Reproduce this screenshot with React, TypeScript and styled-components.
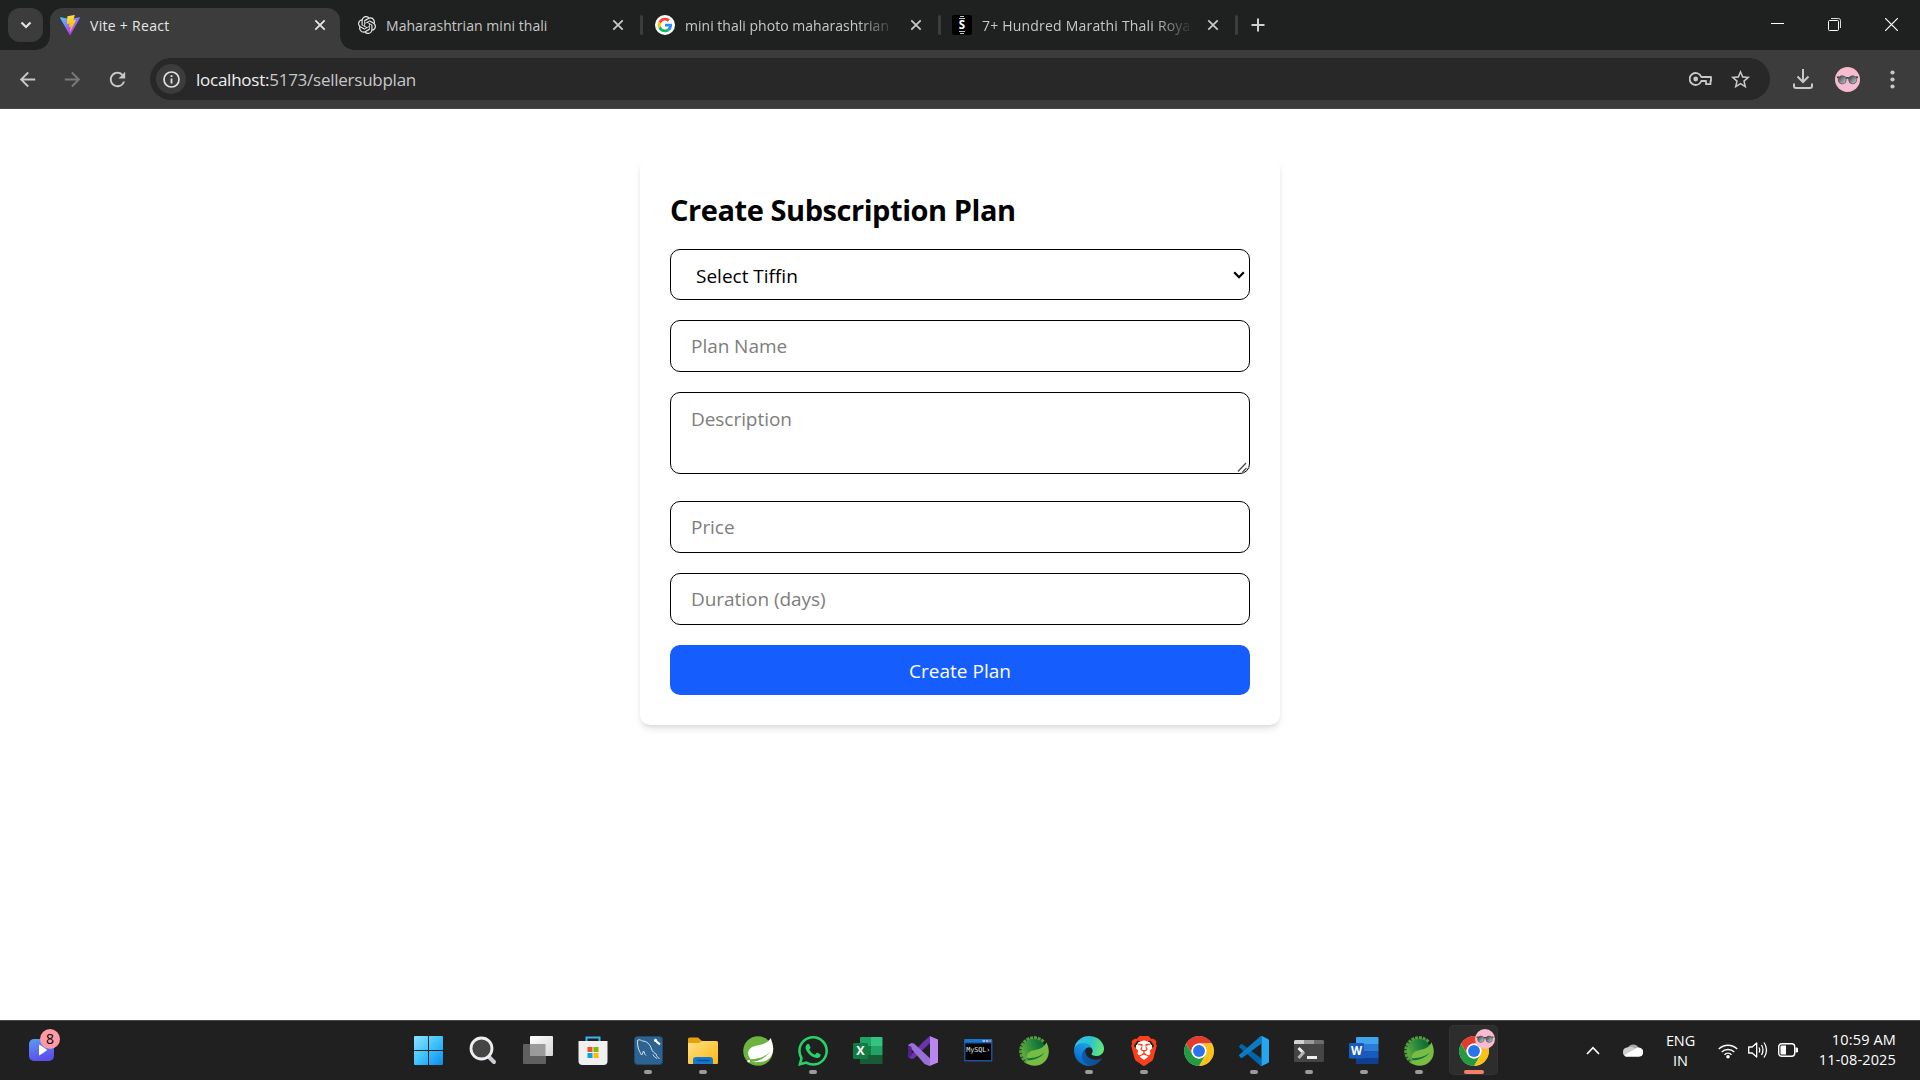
import React from "react";
import styled, { createGlobalStyle } from "styled-components";
import { SiOpenai, SiWhatsapp, SiBrave } from "react-icons/si";
import { MdArrowBack, MdArrowForward, MdRefresh, MdStarBorder } from "react-icons/md";

const GlobalStyle = createGlobalStyle`
  *, *::before, *::after { box-sizing: border-box; }
  body {
    margin: 0;
    background: #fff;
    overflow: hidden;
    font-family: "Segoe UI", "Open Sans", "Noto Sans", sans-serif;
  }
  svg { display: block; flex: none; }
`;

const Screen = styled.div`
  width: 1920px;
  height: 1080px;
  display: flex;
  flex-direction: column;
  overflow: hidden;
`;

/* ---------- Browser chrome ---------- */

const TabStrip = styled.div`
  height: 50px;
  flex: none;
  display: flex;
  align-items: flex-start;
  padding: 8px 0 0 8px;
  background: #1f2120;
`;

const TabSearch = styled.div`
  width: 35px;
  height: 34px;
  margin-right: 7px;
  border-radius: 12px;
  background: #3c3c3c;
  display: flex;
  align-items: center;
  justify-content: center;
`;

const ActiveTab = styled.div`
  position: relative;
  width: 290px;
  height: 42px;
  padding: 0 14px 8px 10px;
  border-radius: 13px 13px 0 0;
  background: #3c3c3c;
  display: flex;
  align-items: center;
  gap: 10px;
  &::before, &::after {
    content: "";
    position: absolute;
    bottom: 0;
    width: 14px;
    height: 14px;
  }
  &::before {
    left: -14px;
    background: radial-gradient(circle at 0 0, transparent 13.5px, #3c3c3c 14px);
  }
  &::after {
    right: -14px;
    background: radial-gradient(circle at 100% 0, transparent 13.5px, #3c3c3c 14px);
  }
`;

const Tab = styled.div<{ $w: number; $pad: number }>`
  width: ${(p) => p.$w}px;
  height: 34px;
  padding: 0 16.5px 0 ${(p) => p.$pad}px;
  display: flex;
  align-items: center;
  gap: 10px;
`;

const TabTitle = styled.span<{ $bright?: boolean; $fade?: boolean; $ls?: number }>`
  flex: 1;
  min-width: 0;
  overflow: hidden;
  white-space: nowrap;
  font-size: 14px;
  line-height: 20px;
  padding-top: 1px;
  letter-spacing: ${(p) => p.$ls ?? 0}px;
  color: ${(p) => (p.$bright ? "#e6e6e6" : "#c8c8c8")};
  ${(p) => p.$fade && "mask-image: linear-gradient(90deg, #000 calc(100% - 42px), transparent calc(100% - 4px));"}
`;

const TabDivider = styled.div`
  width: 3px;
  height: 20px;
  margin-top: 7px;
  border-radius: 2px;
  background: #3c3e3d;
`;

const NewTab = styled.div`
  width: 40px;
  height: 34px;
  display: flex;
  align-items: center;
  justify-content: center;
`;

const Caption = styled.div`
  margin-left: auto;
  height: 33px;
  display: flex;
  align-items: center;
  gap: 44px;
  padding-right: 22px;
`;

const Toolbar = styled.div`
  height: 59px;
  flex: none;
  display: flex;
  align-items: center;
  background: #3c3c3c;
  border-bottom: 1px solid #4a4848;
  padding: 0 0 0 16px;
`;

const NavButton = styled.div<{ $dim?: boolean }>`
  width: 23px;
  margin-right: 22px;
  flex: none;
  display: flex;
  justify-content: center;
  color: ${(p) => (p.$dim ? "#7a7a7a" : "#c8c8c8")};
  font-size: 23px;
`;

const Omnibox = styled.div`
  flex: none;
  width: 1620px;
  height: 42px;
  margin-left: -1px;
  border-radius: 21px;
  background: #282828;
  display: flex;
  align-items: center;
  padding: 0 18px 0 6px;
`;

const SiteInfo = styled.div`
  width: 30px;
  height: 30px;
  border-radius: 50%;
  background: #3c3c3c;
  display: flex;
  align-items: center;
  justify-content: center;
`;

const Url = styled.div`
  margin-left: 10px;
  flex: 1;
  font-size: 17px;
  line-height: 24px;
  padding-top: 1px;
  letter-spacing: -0.25px;
  color: #c7c7c7;
  b { font-weight: 400; color: #f0f0f0; }
`;

const OmniboxIcons = styled.div`
  display: flex;
  align-items: center;
  gap: 16px;
  color: #c8c8c8;
  font-size: 23px;
`;

const ToolIcons = styled.div`
  display: flex;
  align-items: center;
  margin-left: 22px;
`;

const Avatar = styled.div`
  margin: 0 30px 0 21px;
`;

/* ---------- Page ---------- */

const Page = styled.main`
  flex: 1;
  background: #fff;
  display: flex;
  justify-content: center;
  align-items: flex-start;
  padding-top: 50px;
`;

const Card = styled.form`
  width: 640px;
  height: 566px;
  padding: 30px;
  border-radius: 10px;
  background: #fff;
  box-shadow: 0 5px 7.5px -1px rgba(0, 0, 0, 0.1), 0 2.5px 5px -2.5px rgba(0, 0, 0, 0.1);
  display: flex;
  flex-direction: column;
`;

const Heading = styled.h2`
  margin: 0 0 20px;
  font-size: 29px;
  line-height: 42px;
  height: 40px;
  font-weight: 700;
  letter-spacing: -0.44px;
  color: #000;
  white-space: nowrap;
`;

const fieldStyle = `
  width: 100%;
  margin: 0 0 20px;
  border: 1px solid #000;
  border-radius: 10px;
  background: #fff;
  color: #000;
  font-family: inherit;
  font-size: 19px;
  line-height: 30px;
  letter-spacing: -0.05px;
  outline: none;
  &::placeholder { color: #7d7d7d; opacity: 1; }
`;

const SelectBox = styled.label`
  ${fieldStyle}
  height: 51px;
  display: flex;
  align-items: center;
  padding: 1px 4px 0 25px;
`;

const Select = styled.select`
  flex: 1;
  appearance: none;
  border: 0;
  padding: 1px 0 0;
  background: transparent;
  color: inherit;
  font: inherit;
  letter-spacing: 0;
  outline: none;
`;

const Input = styled.input`
  ${fieldStyle}
  height: 52px;
  padding: 10px 20px;
`;

const AreaBox = styled.div`
  ${fieldStyle}
  height: 82px;
  margin-bottom: 27px;
  display: flex;
  align-items: flex-end;
  padding-right: 1px;
`;

const Area = styled.textarea`
  flex: 1;
  height: 80px;
  border: 0;
  margin: 0;
  padding: 11px 0 0 20px;
  resize: none;
  background: transparent;
  font: inherit;
  letter-spacing: inherit;
  outline: none;
  &::placeholder { color: #7d7d7d; opacity: 1; }
`;

const Submit = styled.button`
  height: 50px;
  border: 0;
  border-radius: 10px;
  background: #155dfc;
  color: #fff;
  font-family: inherit;
  font-size: 19px;
  letter-spacing: 0;
  line-height: 30px;
  padding: 2px 0 0;
`;

/* ---------- Taskbar ---------- */

const Taskbar = styled.footer`
  height: 60px;
  flex: none;
  display: flex;
  background: #202020;
  border-top: 1px solid #484848;
  color: #fff;
`;

const Widgets = styled.div`
  position: relative;
  width: 403.5px;
  padding: 18px 0 0 28.5px;
`;

const Badge = styled.span`
  position: absolute;
  left: 40px;
  top: 8px;
  width: 20px;
  height: 20px;
  border-radius: 50%;
  background: #ff99a4;
  color: #000;
  font-size: 14px;
  line-height: 20px;
  text-align: center;
`;

const Apps = styled.div`
  display: flex;
  gap: 6.050px;
  padding-top: 4px;
`;

const AppButton = styled.div<{ $active?: boolean }>`
  position: relative;
  width: 49px;
  height: 50px;
  border-radius: 5px;
  display: flex;
  justify-content: center;
  padding-top: 10.500px;
  ${(p) => p.$active && "background: #2d2d2d; box-shadow: inset 0 0 0 1px #343434;"}
`;

const Running = styled.i<{ $active?: boolean }>`
  position: absolute;
  bottom: 1px;
  left: 50%;
  transform: translateX(-50%);
  width: ${(p) => (p.$active ? 20 : 8)}px;
  height: 4px;
  border-radius: 2px;
  background: ${(p) => (p.$active ? "#f5806a" : "#9b9b9b")};
`;

const ProfileMark = styled.div`
  position: absolute;
  top: 4px;
  left: 26px;
`;

const Tray = styled.div`
  margin-left: auto;
  display: flex;
  align-items: center;
  padding: 0 24px 1px 0;
`;

const CloudSlot = styled.div`
  margin-left: 23px;
`;

const TrayText = styled.div<{ $align: string; $w: number; $ls: number; $top?: number }>`
  width: ${(p) => p.$w}px;
  text-align: ${(p) => p.$align};
  font-size: 14.500px;
  line-height: 20px;
  padding-top: ${(p) => p.$top ?? 0}px;
  white-space: nowrap;
  letter-spacing: ${(p) => p.$ls}px;
`;

const Status = styled.div`
  display: flex;
  align-items: center;
  gap: 10px;
`;

/* ---------- Drawings ---------- */

const Cross = ({ c = "#c8c8c8" }: { c?: string }) => (
  <svg width="12" height="12" viewBox="0 0 12 12">
    <path d="M1.3 1.3 10.7 10.7M10.7 1.3 1.3 10.7" stroke={c} strokeWidth="1.8" />
  </svg>
);

const Vite = () => (
  <svg width="20" height="20" viewBox="0 0 256 257">
    <defs>
      <linearGradient id="va" x1="0" y1="0" x2="0.6" y2="0.9">
        <stop offset="0" stopColor="#41d1ff" />
        <stop offset="1" stopColor="#bd34fe" />
      </linearGradient>
      <linearGradient id="vb" x1="0.4" y1="0" x2="0.5" y2="1">
        <stop offset="0" stopColor="#ffea83" />
        <stop offset="0.1" stopColor="#ffdd35" />
        <stop offset="1" stopColor="#ffa800" />
      </linearGradient>
    </defs>
    <path fill="url(#va)" d="M255.153 37.938 134.897 252.976c-2.483 4.44-8.862 4.466-11.382.048L.875 37.958c-2.746-4.814 1.371-10.646 6.827-9.67l120.385 21.517a6.537 6.537 0 0 0 2.322-.004l117.867-21.483c5.438-.991 9.574 4.796 6.877 9.62Z" />
    <path fill="url(#vb)" d="M185.432.063 96.44 17.501a3.268 3.268 0 0 0-2.634 3.014l-5.474 92.456a3.268 3.268 0 0 0 3.997 3.378l24.777-5.718c2.318-.535 4.413 1.507 3.936 3.838l-7.361 36.047c-.495 2.426 1.782 4.5 4.151 3.78l15.304-4.649c2.372-.72 4.652 1.36 4.15 3.788l-11.698 56.621c-.732 3.542 3.979 5.473 5.943 2.437l1.313-2.028 72.516-144.72c1.215-2.423-.88-5.186-3.54-4.672l-25.505 4.922c-2.396.462-4.435-1.77-3.759-4.114l16.646-57.705c.677-2.35-1.37-4.583-3.769-4.113Z" />
  </svg>
);

const Google = () => (
  <svg width="20" height="20" viewBox="-9 -9 66 66">
    <circle cx="24" cy="24" r="33" fill="#fff" />
    <path fill="#FF4131" d="M24 9.5c3.54 0 6.71 1.22 9.21 3.6l6.85-6.85C35.9 2.38 30.47 0 24 0 14.62 0 6.51 5.38 2.56 13.22l7.98 6.19C12.43 13.72 17.74 9.5 24 9.5z" />
    <path fill="#3186FF" d="M46.98 24.55c0-1.57-.15-3.09-.38-4.55H24v9.02h12.94c-.58 2.96-2.26 5.48-4.78 7.18l7.73 6c4.51-4.18 7.09-10.36 7.09-17.65z" />
    <path fill="#FCC400" d="M10.53 28.59c-.48-1.45-.76-2.99-.76-4.59s.27-3.14.76-4.59l-7.98-6.19C.92 16.46 0 20.12 0 24c0 3.88.92 7.54 2.56 10.78l7.97-6.19z" />
    <path fill="#0EBC5F" d="M24 48c6.48 0 11.93-2.13 15.89-5.81l-7.73-6c-2.15 1.45-4.92 2.3-8.16 2.3-6.26 0-11.57-4.22-13.47-9.91l-7.98 6.19C6.51 42.62 14.62 48 24 48z" />
  </svg>
);

const SFavicon = () => (
  <svg width="20" height="20" viewBox="0 0 20 20">
    <rect width="20" height="20" rx="2" fill="#000" />
    <path d="M8 1.500h4M7 3.500h6M7 16.500h6M8 18.500h4" stroke="#c4c4c4" strokeWidth="1" />
    <text x="10" y="14" textAnchor="middle" fontFamily="Open Sans" fontWeight="700" fontSize="11.500" fill="#fff">S</text>
  </svg>
);

const Shades = ({ size }: { size: number }) => (
  <svg width={size} height={size} viewBox="0 0 25 25">
    <defs>
      <linearGradient id="lens" x1="0" y1="0" x2="1" y2="1">
        <stop offset="0" stopColor="#333" />
        <stop offset="1" stopColor="#c4dde0" />
      </linearGradient>
    </defs>
    <circle cx="12.5" cy="12.5" r="12.5" fill="#f8bbd0" />
    <path d="M2 10.5 4 10M23 10.5 21 10M10.5 11.5q2-1.500 4 0" stroke="#333" strokeWidth="1.4" fill="none" />
    <circle cx="7.3" cy="12.8" r="4" fill="url(#lens)" stroke="#5c5456" strokeWidth="0.8" />
    <circle cx="17.7" cy="12.8" r="4" fill="url(#lens)" stroke="#5c5456" strokeWidth="0.8" />
  </svg>
);

const WindowsLogo = () => (
  <svg width="29" height="29" viewBox="0 0 29 29">
    <defs>
      <linearGradient id="win" gradientUnits="userSpaceOnUse" x1="0" y1="0" x2="29" y2="29">
        <stop offset="0" stopColor="#8fe3ff" />
        <stop offset="0.5" stopColor="#3fc3fb" />
        <stop offset="1" stopColor="#0a8bf0" />
      </linearGradient>
    </defs>
    <path fill="url(#win)" d="M1 0h13v14H0V1a1 1 0 0 1 1-1zM15 0h13a1 1 0 0 1 1 1v13H15zM0 15h14v14H1a1 1 0 0 1-1-1zM15 15h14v13a1 1 0 0 1-1 1H15z" />
  </svg>
);

const SearchLogo = () => (
  <svg width="30" height="30" viewBox="0 0 30 30">
    <path d="m20 20 6 6" stroke="#c9cdd2" strokeWidth="4" strokeLinecap="round" />
    <circle cx="13.500" cy="12.500" r="10.500" fill="#454545" stroke="#eceef0" strokeWidth="2.800" />
  </svg>
);

const TaskView = () => (
  <svg width="30" height="30" viewBox="0 0 30 30">
    <defs>
      <linearGradient id="tv" x1="0" y1="0" x2="1" y2="1">
        <stop offset="0" stopColor="#fff" />
        <stop offset="1" stopColor="#d5d5d5" />
      </linearGradient>
    </defs>
    <rect x="0" y="8" width="23" height="20" rx="1" fill="#606060" />
    <rect x="7" y="0" width="23" height="20" rx="1" fill="url(#tv)" />
    <path d="M7 8h15.500V20H7z" fill="#9b9b9b" />
  </svg>
);

const Store = () => (
  <svg width="30" height="30" viewBox="0 0 30 30">
    <path d="M8.500 6V1.500h13V6" fill="none" stroke="#35b8ef" strokeWidth="2" />
    <path d="M.5 5h29v20a4 4 0 0 1-4 4h-21a4 4 0 0 1-4-4z" fill="#f0f0f0" />
    <path d="M9.500 11h5v5h-5z" fill="#f25022" />
    <path d="M15.500 11h5v5h-5z" fill="#7fba00" />
    <path d="M9.500 17h5v5h-5z" fill="#00a4ef" />
    <path d="M15.500 17h5v5h-5z" fill="#ffb900" />
  </svg>
);

const Workbench = () => (
  <svg width="29" height="29" viewBox="0 0 29 29">
    <rect x="0.500" y="0.500" width="28" height="28" rx="3" fill="#2c6390" stroke="#1f4b6e" />
    <path d="M7.500 19c-1-2-3-5-3.500-8C3.500 8 3 4.500 4 4c2-.8 3 .5 4.500 1 4 0 7.500 3 9 8 .8 2.500 3 4 5 5.500-.8 1 1.500 2.500 3 4.500M7.500 19c1-.8 1.500-3 2-4 1 1 1 3.500 2.500 4.500M19 18.500c.5 2 2.500 3 4 4" fill="none" stroke="#d9e7f0" strokeWidth="1" />
    <path d="m21 3 2 3 3 2.500" stroke="#fff" strokeWidth="2" fill="none" />
    <circle cx="21.500" cy="4.500" r="1.500" fill="#fff" />
  </svg>
);

const Folder = () => (
  <svg width="30" height="29" viewBox="0 0 30 29">
    <defs>
      <linearGradient id="fo" x1="0" y1="0" x2="1" y2="1">
        <stop offset="0" stopColor="#ffe083" />
        <stop offset="1" stopColor="#fdb913" />
      </linearGradient>
    </defs>
    <path d="M0 3a1.500 1.500 0 0 1 1.500-1.500H10L14 5v6H0z" fill="#e5a00d" />
    <path d="M0 7h11l3-2h14.500A1.500 1.500 0 0 1 30 6.500V27a1 1 0 0 1-1 1H1a1 1 0 0 1-1-1z" fill="url(#fo)" />
    <path d="M5 28v-4a3 3 0 0 1 3-3h14a3 3 0 0 1 3 3v4z" fill="#1478d0" />
    <path d="M8.500 24.500h13" stroke="#0b4f96" strokeWidth="1.500" />
  </svg>
);

const SpringRound = () => (
  <svg width="31" height="31" viewBox="0 0 31 31">
    <circle cx="15" cy="15" r="14.800" fill="#6db33f" />
    <path d="M27.800 2c.7 3 2.700 7 2.400 11.500-.4 7-5 11.500-11.500 12.300-3.500.5-7.200.4-10.200.2 7-.7 13.500-3.500 19-10.500-5 5-11 7.500-20 7.700C2.500 17 6 11.500 12 10c5.500-1.200 12-1.500 15.800-8z" fill="#fff" />
    <circle cx="5.700" cy="25.300" r="1.300" fill="#fff" />
  </svg>
);

const SpringGear = () => {
  const teeth = Array.from({ length: 12 }, (_, i) => 128 + i * 16.5);
  return (
    <svg width="30" height="30" viewBox="0 0 31 31">
      <defs>
        <linearGradient id="sg" x1="0" y1="0.600" x2="0.900" y2="0.300">
          <stop offset="0" stopColor="#63ad3d" />
          <stop offset="0.500" stopColor="#2b8a3c" />
          <stop offset="1" stopColor="#0c6a34" />
        </linearGradient>
      </defs>
      {teeth.map((a) => (
        <rect key={a} x="26.500" y="13.800" width="4.300" height="3.200" fill="#4f9f3e" transform={`rotate(${a} 15.500 15.500)`} />
      ))}
      <circle cx="15.500" cy="15.500" r="12.400" fill="url(#sg)" />
      <path d="M28.500 6.500c.8 2.500 2.500 5.500 2.300 10C30.500 24.500 24.500 30.700 16 30.700c-4 0-7-1.200-9-3l2-2.500C6.500 20.500 9.500 16 14.500 15c5.500-1 11-2.500 14-8.500z" fill="#77bc43" />
      <path d="M9 25c7 0 13.500-2.500 17.500-8-4.500 4-10 5.800-18.500 6z" fill="#15703a" />
    </svg>
  );
};

const Excel = () => (
  <svg width="30" height="30" viewBox="0 0 30 30">
    <path d="M7 2a1 1 0 0 1 1-1h10v9H7z" fill="#21a366" />
    <path d="M18 1h10.500a1 1 0 0 1 1 1v8H18z" fill="#33c481" />
    <path d="M7 10h11v9H7z" fill="#107c41" />
    <path d="M18 10h11.500v9H18z" fill="#21a366" />
    <path d="M7 19h22.500v8a1 1 0 0 1-1 1H8a1 1 0 0 1-1-1z" fill="#185c37" />
    <rect x="0" y="7" width="15" height="16" rx="1" fill="#107c41" />
    <text x="7.500" y="19.300" textAnchor="middle" fontFamily="Open Sans" fontWeight="700" fontSize="12.500" fill="#fff">X</text>
  </svg>
);

const Word = () => (
  <svg width="30" height="30" viewBox="0 0 30 30">
    <path d="M7 8V2a1 1 0 0 1 1-1h20.500a1 1 0 0 1 1 1v6z" fill="#41a5ee" />
    <path d="M7 8h22.500v7H7z" fill="#2b7cd3" />
    <path d="M7 15h22.500v7H7z" fill="#185abd" />
    <path d="M7 22h22.500v5a1 1 0 0 1-1 1H8a1 1 0 0 1-1-1z" fill="#103f91" />
    <rect x="0" y="7" width="15" height="15.500" rx="1" fill="#185abd" />
    <text x="7.500" y="19" textAnchor="middle" fontFamily="Open Sans" fontWeight="700" fontSize="11.500" fill="#fff">W</text>
  </svg>
);

const VisualStudio = () => (
  <svg width="30" height="30" viewBox="0 0 30 30">
    <path d="M0 9 3.500 7v15.500L0 21z" fill="#52218a" />
    <path d="M0 21l1.500-.5L16 5l6-5 3 4L6 22.500 3.500 23z" fill="#6c33af" />
    <path d="M0 9 3.500 7 6 7.500 26 26l-4.500 4-5-2z" fill="#9a6fd6" />
    <path d="M0 21 .5 9.500 3.500 11v9z" fill="#52218a" />
    <path d="M21.500 0 30 3.500v23L21.500 30c.6-.4.5-1 .5-2V2c0-1 .1-1.600-.5-2z" fill="#b887ee" />
  </svg>
);

const MySqlShell = () => (
  <svg width="29" height="26" viewBox="0 0 29 26">
    <rect x="0" y="3" width="28.500" height="22.500" rx="1" fill="#1d4f94" />
    <rect x="0.500" y="3" width="27.500" height="3.500" fill="#1874cc" />
    <path d="M18.500 4h2.500v2h-2.500zM21.800 4h2.500v2h-2.500z" fill="#8fc0ee" />
    <path d="M25 4h2v2h-2z" fill="#e06c50" />
    <rect x="1.500" y="7.500" width="25.500" height="16.500" fill="#000" />
    <text x="2.300" y="15.500" fontFamily="DejaVu Sans Mono" fontSize="6.800" fill="#e6e6e6" textLength="24">MySQL›</text>
  </svg>
);

const Edge = () => (
  <svg width="30" height="30" viewBox="0 0 256 256">
    <defs>
      <linearGradient id="ea" x1="0.200" y1="0.500" x2="1" y2="0.600">
        <stop offset="0" stopColor="#0c59a4" />
        <stop offset="1" stopColor="#114a8b" />
      </linearGradient>
      <linearGradient id="eb" x1="0.700" y1="0.200" x2="0.300" y2="0.900">
        <stop offset="0" stopColor="#1b9de2" />
        <stop offset="0.500" stopColor="#1383d8" />
        <stop offset="1" stopColor="#0864c5" />
      </linearGradient>
      <linearGradient id="ec" x1="0" y1="0.400" x2="1" y2="0.600">
        <stop offset="0" stopColor="#35c1f1" />
        <stop offset="0.500" stopColor="#2dc2cf" />
        <stop offset="1" stopColor="#66eb6e" />
      </linearGradient>
    </defs>
    <path fill="url(#ea)" d="M231.070 190.540c-3.400 1.770-6.900 3.340-10.500 4.690a101.850 101.850 0 0 1-35.880 6.460c-47.280 0-88.470-32.520-88.470-74.260.13-11.400 6.390-21.830 16.350-27.280-42.770 1.800-53.770 46.350-53.770 72.440 0 73.800 68 81.270 82.660 81.270 7.900 0 19.820-2.300 26.980-4.560l1.300-.44a128.330 128.330 0 0 0 66.600-52.800 4 4 0 0 0-5.270-5.520z" />
    <path fill="url(#eb)" d="M105.730 241.420a79.200 79.200 0 0 1-22.740-21.340 80.720 80.720 0 0 1 29.530-120c3.120-1.470 8.450-4.120 15.540-4A32.350 32.350 0 0 1 153.760 109a31.890 31.890 0 0 1 6.360 18.660c0-.21 24.460-79.600-80-79.600-43.900 0-80 41.660-80 78.220a130.150 130.150 0 0 0 12.110 56 128 128 0 0 0 156.380 67.100 75.550 75.550 0 0 1-62.780-8z" />
    <path fill="url(#ec)" d="M152.330 148.860c-.81 1.050-3.300 2.500-3.300 5.660 0 2.600 1.700 5.120 4.720 7.230 14.380 10 41.490 8.680 41.560 8.680 10.660 0 21.110-2.870 30.300-8.300a61.370 61.370 0 0 0 30.430-52.880c.26-22.410-8-37.310-11.340-43.910C223.510 23.850 177.720 0 128 0A128 128 0 0 0 .12 126.220c.48-36.540 36.800-66.050 80-66.050 3.500 0 23.460.34 42 10.070 16.340 8.580 24.900 18.940 30.850 29.210 6.180 10.670 7.280 24.150 7.280 29.520 0 5.370-2.740 13.330-7.920 19.890z" />
  </svg>
);

const Chrome = () => (
  <svg width="30" height="30" viewBox="0 0 48 48">
    <circle cx="24" cy="24" r="23.500" fill="#fff" />
    <path d="M3.220 12A24 24 0 0 1 44.780 12H24a12 12 0 0 0-10.390 18z" fill="#e33b2e" />
    <path d="M44.780 12A24 24 0 0 1 24 48l10.390-18A12 12 0 0 0 24 12z" fill="#fbc116" />
    <path d="M24 48A24 24 0 0 1 3.220 12l10.390 18a12 12 0 0 0 20.780 0z" fill="#249a41" />
    <circle cx="24" cy="24" r="12" fill="#fff" />
    <circle cx="24" cy="24" r="9.500" fill="#2a74eb" />
  </svg>
);

const Code = () => (
  <svg width="30" height="30" viewBox="0 0 30 30">
    <path d="M0 10.200 1.800 8.200q.8-.6 1.600 0L22.500 22.500v7.200q-1 .2-1.700-.5L.3 11.300q-.6-.5-.3-1.100z" fill="#0065a9" />
    <path d="M0 19.800 1.800 21.800q.8.600 1.600 0L22.500 7.500V.3q-1-.2-1.700.5L.3 18.700q-.6.500-.3 1.100z" fill="#0a7bc4" />
    <path d="m22.800 0 6.200 3q1 .5 1 1.600v20.800q0 1.100-1 1.600l-6.200 3q-1 0-1.800-.8 1.500.7 1.500-1V1.800q0-1.700-1.500-1 .8-.8 1.800-.8z" fill="#26a5f0" />
  </svg>
);

const Terminal = () => (
  <svg width="30" height="30" viewBox="0 0 30 30">
    <rect x="0" y="4" width="30" height="22" rx="1.500" fill="#454545" />
    <path d="M0 5.500A1.500 1.500 0 0 1 1.500 4H10v4H0z" fill="#d2d2d2" />
    <path d="M10 4h10v4H10z" fill="#9a9a9a" />
    <path d="M20 4h8.500A1.500 1.500 0 0 1 30 5.500V8H20z" fill="#6c6c6c" />
    <path d="m4.500 12 5 5" stroke="#efefef" strokeWidth="3" />
    <path d="m10 16-5.500 6" stroke="#b5b5b5" strokeWidth="3" />
    <path d="M13 21.500h10" stroke="#efefef" strokeWidth="3" />
  </svg>
);

const BraveTile = styled.div`
  width: 26px;
  height: 30px;
  display: flex;
  align-items: center;
  justify-content: center;
  color: #fb3e1b;
  font-size: 30px;
  background: radial-gradient(ellipse 9px 11px at 50% 50%, #fff 98%, transparent);
`;

const WhatsappTile = styled.div`
  height: 30px;
  color: #25d366;
  font-size: 30px;
`;

const apps: { icon: React.ReactNode; running?: boolean; active?: boolean }[] = [
  { icon: <WindowsLogo /> },
  { icon: <SearchLogo /> },
  { icon: <TaskView /> },
  { icon: <Store /> },
  { icon: <Workbench />, running: true },
  { icon: <Folder />, running: true },
  { icon: <SpringRound /> },
  { icon: <WhatsappTile><SiWhatsapp /></WhatsappTile>, running: true },
  { icon: <Excel /> },
  { icon: <VisualStudio /> },
  { icon: <MySqlShell /> },
  { icon: <SpringGear /> },
  { icon: <Edge />, running: true },
  { icon: <BraveTile><SiBrave /></BraveTile>, running: true },
  { icon: <Chrome /> },
  { icon: <Code />, running: true },
  { icon: <Terminal />, running: true },
  { icon: <Word />, running: true },
  { icon: <SpringGear />, running: true },
  { icon: <Chrome />, running: true, active: true },
];

export default function App() {
  return (
    <Screen>
      <GlobalStyle />
      <TabStrip>
        <TabSearch>
          <svg width="12" height="8" viewBox="0 0 12 8">
            <path d="m1.500 1.500 4.500 4.500 4.500-4.500" fill="none" stroke="#e3e3e3" strokeWidth="2.200" />
          </svg>
        </TabSearch>
        <ActiveTab>
          <Vite />
          <TabTitle $bright $ls={0.3}>Vite + React</TabTitle>
          <Cross c="#e6e6e6" />
        </ActiveTab>
        <Tab $w={300} $pad={18}>
          <SiOpenai size={18} color="#e8e8e8" />
          <TabTitle $ls={0.04}>Maharashtrian mini thali</TabTitle>
          <Cross />
        </Tab>
        <TabDivider />
        <Tab $w={295} $pad={12}>
          <Google />
          <TabTitle $fade $ls={0.02}>mini thali photo maharashtrian</TabTitle>
          <Cross />
        </Tab>
        <TabDivider />
        <Tab $w={294} $pad={11}>
          <SFavicon />
          <TabTitle $fade $ls={0.2}>7+ Hundred Marathi Thali Royal</TabTitle>
          <Cross />
        </Tab>
        <TabDivider />
        <NewTab>
          <svg width="14" height="14" viewBox="0 0 14 14">
            <path d="M7 0.500v13M0.500 7h13" stroke="#d0d0d0" strokeWidth="2" />
          </svg>
        </NewTab>
        <Caption>
          <svg width="13" height="13" viewBox="0 0 13 13">
            <path d="M0 5.500h13" stroke="#fff" />
          </svg>
          <svg width="13" height="13" viewBox="0 0 13 13">
            <rect x="0.500" y="2.500" width="10" height="10" rx="1" fill="none" stroke="#fff" />
            <path d="M3 .5h7.500a2 2 0 0 1 2 2V10" fill="none" stroke="#ddd" />
          </svg>
          <svg width="13" height="13" viewBox="0 0 13 13">
            <path d="M0 0 13 13M13 0 0 13" stroke="#fff" strokeWidth="1.200" />
          </svg>
        </Caption>
      </TabStrip>

      <Toolbar>
        <NavButton><MdArrowBack /></NavButton>
        <NavButton $dim><MdArrowForward /></NavButton>
        <NavButton><MdRefresh /></NavButton>
        <Omnibox>
          <SiteInfo>
            <svg width="17" height="17" viewBox="0 0 17 17">
              <circle cx="8.500" cy="8.500" r="7.500" fill="none" stroke="#e0e0e0" strokeWidth="1.700" />
              <path d="M8.500 7.500v5M8.500 4.300v1.800" stroke="#e0e0e0" strokeWidth="1.800" />
            </svg>
          </SiteInfo>
          <Url><b>localhost:</b>5173/sellersubplan</Url>
          <OmniboxIcons>
            <svg width="24" height="14" viewBox="0 0 24 14">
              <path d="M12.300 5A6 6 0 1 0 12.300 9H17v3.200h4.500V9H22V5z" fill="none" stroke="#c8c8c8" strokeWidth="1.800" strokeLinejoin="round" />
              <circle cx="6.700" cy="7" r="2.400" fill="#c8c8c8" />
            </svg>
            <MdStarBorder />
          </OmniboxIcons>
        </Omnibox>
        <ToolIcons>
          <svg width="22" height="22" viewBox="0 0 22 22">
            <path d="M11 1v12.500M5.500 8.500 11 14l5.500-5.500" fill="none" stroke="#c8c8c8" strokeWidth="2" />
            <path d="M2 15.500V18a2 2 0 0 0 2 2h14a2 2 0 0 0 2-2v-2.500" fill="none" stroke="#c8c8c8" strokeWidth="2" />
          </svg>
          <Avatar><Shades size={25} /></Avatar>
          <svg width="5" height="19" viewBox="0 0 5 19">
            <circle cx="2.500" cy="2.500" r="2.100" fill="#c8c8c8" />
            <circle cx="2.500" cy="9.500" r="2.100" fill="#c8c8c8" />
            <circle cx="2.500" cy="16.500" r="2.100" fill="#c8c8c8" />
          </svg>
        </ToolIcons>
      </Toolbar>

      <Page>
        <Card>
          <Heading>Create Subscription Plan</Heading>
          <SelectBox>
            <Select defaultValue="">
              <option value="">Select Tiffin</option>
            </Select>
            <svg width="12" height="8" viewBox="0 0 12 8">
              <path d="m1.200 1.200 4.800 5 4.800-5" fill="none" stroke="#000" strokeWidth="2.200" />
            </svg>
          </SelectBox>
          <Input placeholder="Plan Name" />
          <AreaBox>
            <Area placeholder="Description" />
            <svg width="11" height="11" viewBox="0 0 11 11">
              <path d="M1 9.500 9 1M5.500 10 9.500 6" stroke="#444" strokeWidth="1.200" />
            </svg>
          </AreaBox>
          <Input placeholder="Price" />
          <Input placeholder="Duration (days)" />
          <Submit type="button">Create Plan</Submit>
        </Card>
      </Page>

      <Taskbar>
        <Widgets>
          <svg width="25" height="22" viewBox="0 0 25 22">
            <defs>
              <linearGradient id="wd" x1="0" y1="0" x2="0.300" y2="1">
                <stop offset="0" stopColor="#5b9bf3" />
                <stop offset="1" stopColor="#5b50ea" />
              </linearGradient>
            </defs>
            <rect width="25" height="22" rx="5" fill="url(#wd)" />
            <path d="M10 6.200v9.600q0 .8.700.4l7-4.700q.5-.5 0-1l-7-4.700q-.7-.4-.7.400z" fill="#fff" />
          </svg>
          <Badge>8</Badge>
        </Widgets>
        <Apps>
          {apps.map((a, i) => (
            <AppButton key={i} $active={a.active}>
              {a.icon}
              {a.active && <ProfileMark><Shades size={20} /></ProfileMark>}
              {a.running && <Running $active={a.active} />}
            </AppButton>
          ))}
        </Apps>
        <Tray>
          <svg width="14" height="9" viewBox="0 0 14 9">
            <path d="m1 8 6-6.300L13 8" fill="none" stroke="#fff" strokeWidth="1.700" />
          </svg>
          <CloudSlot>
            <svg width="20" height="14" viewBox="0 0 20 14">
              <path d="M5 4.500a6 6 0 0 1 10.500 0L18 9H3z" fill="#a9a9a9" />
              <path d="M4 4.500a4.700 4.700 0 0 0 0 9.300L13 6Q8 2.500 4 4.500z" fill="#cfcfcf" />
              <path d="M1.500 12 12 6q2-2 5-1.200a4.600 4.600 0 0 1-1 9H4q-1.800-.3-2.500-1.800z" fill="#fff" />
            </svg>
          </CloudSlot>
          <TrayText $align="center" $w={75} $ls={-0.1} $top={2}>ENG<br />IN</TrayText>
          <Status>
            <svg width="20" height="17" viewBox="0 0 20 17">
              <path d="M.8 7a13 13 0 0 1 18.400 0M3.700 10a9 9 0 0 1 12.600 0M6.500 12.700a5 5 0 0 1 7 0" fill="none" stroke="#fff" strokeWidth="1.500" />
              <circle cx="10" cy="14.700" r="1.800" fill="#fff" />
            </svg>
            <svg width="20" height="18" viewBox="0 0 20 18">
              <path d="M.7 6v6h3.500l4.500 4V2L4.200 6z" fill="none" stroke="#fff" strokeWidth="1.300" strokeLinejoin="round" />
              <path d="M11 6.500q1.500 2.500 0 5M13.500 4q3 5 0 10M16 1.500q5 7.500 0 15" fill="none" stroke="#fff" strokeWidth="1.300" />
            </svg>
            <svg width="20" height="14" viewBox="0 0 20 14">
              <rect x="0.700" y="0.700" width="16" height="12.600" rx="3" fill="none" stroke="#fff" strokeWidth="1.400" />
              <path d="M2.500 3.500q0-1 1-1H8v9H3.500q-1 0-1-1z" fill="#fff" />
              <path d="M17.500 4.500h1q1.500 0 1.500 1.200v2.600q0 1.200-1.500 1.200h-1z" fill="#fff" />
            </svg>
          </Status>
          <TrayText $align="right" $w={98} $ls={0.15}>10:59 AM<br />11-08-2025</TrayText>
        </Tray>
      </Taskbar>
    </Screen>
  );
}
